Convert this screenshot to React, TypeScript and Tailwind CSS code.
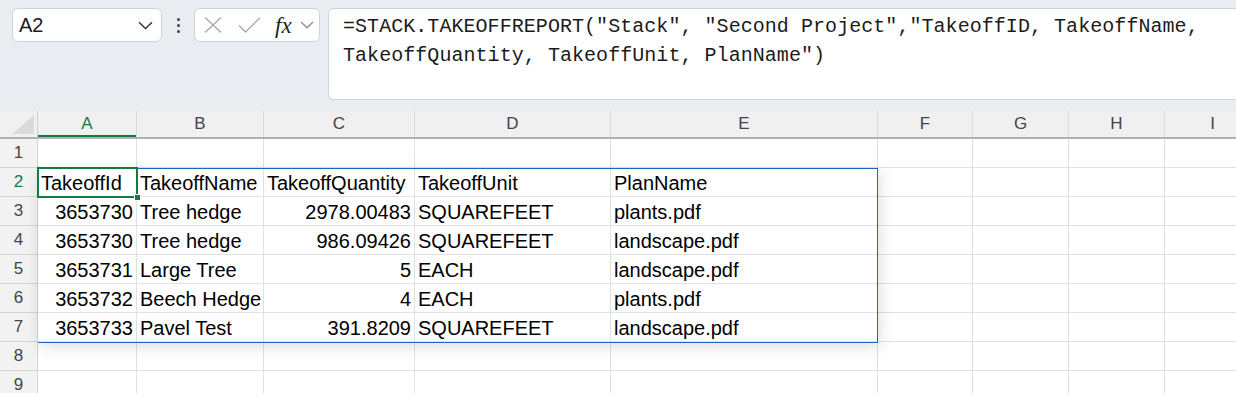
import React from 'react';

const cols = ['A', 'B', 'C', 'D', 'E', 'F', 'G', 'H', 'I'];

type Cell = { v: string; right?: boolean };

const rows: Cell[][] = [
  [],
  [{ v: 'TakeoffId' }, { v: 'TakeoffName' }, { v: 'TakeoffQuantity' }, { v: 'TakeoffUnit' }, { v: 'PlanName' }],
  [{ v: '3653730', right: true }, { v: 'Tree hedge' }, { v: '2978.00483', right: true }, { v: 'SQUAREFEET' }, { v: 'plants.pdf' }],
  [{ v: '3653730', right: true }, { v: 'Tree hedge' }, { v: '986.09426', right: true }, { v: 'SQUAREFEET' }, { v: 'landscape.pdf' }],
  [{ v: '3653731', right: true }, { v: 'Large Tree' }, { v: '5', right: true }, { v: 'EACH' }, { v: 'landscape.pdf' }],
  [{ v: '3653732', right: true }, { v: 'Beech Hedge' }, { v: '4', right: true }, { v: 'EACH' }, { v: 'plants.pdf' }],
  [{ v: '3653733', right: true }, { v: 'Pavel Test' }, { v: '391.8209', right: true }, { v: 'SQUAREFEET' }, { v: 'landscape.pdf' }],
  [],
  [],
];

const gridCols = 'grid grid-cols-[38px_99px_127px_151px_196px_267px_95px_96px_96px_96px]';

const FormulaBar: React.FC = () => (
  <div className="flex h-[111px] items-start bg-[#e9edf2] pl-3 pt-2 overflow-hidden">
    {/* Name box */}
    <div className="flex h-[34px] w-[150px] items-center justify-between rounded-md border border-[#cfd3d8] bg-white pl-[6px] pr-[8px]">
      <span className="text-[20px] text-[#1b1b1b]">A2</span>
      <svg width="15" height="9" viewBox="0 0 15 9" fill="none">
        <path d="M1 1.2 L7.5 7.5 L14 1.2" stroke="#333" strokeWidth="1.4" />
      </svg>
    </div>

    {/* more dots */}
    <div className="flex h-[34px] w-[32px] flex-col items-center justify-center gap-[3px]">
      <span className="h-[3px] w-[3px] rounded-full bg-[#444]" />
      <span className="h-[3px] w-[3px] rounded-full bg-[#444]" />
      <span className="h-[3px] w-[3px] rounded-full bg-[#444]" />
    </div>

    {/* cancel / enter / fx */}
    <div className="flex h-[34px] w-[126px] items-center rounded-md border border-[#cfd3d8] bg-white pl-[9px]">
      <svg width="18" height="16" viewBox="0 0 18 16" fill="none">
        <path d="M1 0.5 L17 15.5 M17 0.5 L1 15.5" stroke="#a8a8a8" strokeWidth="1.3" />
      </svg>
      <svg className="ml-[16px]" width="23" height="16" viewBox="0 0 23 16" fill="none">
        <path d="M1 8.5 L7.5 15 L22 0.7" stroke="#a8a8a8" strokeWidth="1.3" />
      </svg>
      <span
        className="ml-[14px] text-[23px] italic leading-none text-[#222]"
        style={{ fontFamily: '"Liberation Serif", serif' }}
      >
        fx
      </span>
      <svg className="ml-[8px]" width="14" height="8" viewBox="0 0 14 8" fill="none">
        <path d="M1 1 L7 6.8 L13 1" stroke="#8a8a8a" strokeWidth="1.2" />
      </svg>
    </div>

    {/* formula */}
    <div className="ml-2 -mr-3 h-[92px] flex-1 rounded-md border border-[#cfd3d8] bg-white pl-[14px] pt-[3px]">
      <p
        className="text-[20px] leading-[29px] tracking-[0.05px] text-[#1b1b1b] whitespace-pre"
        style={{ fontFamily: '"Liberation Mono", monospace' }}
      >
        {'=STACK.TAKEOFFREPORT("Stack", "Second Project","TakeoffID, TakeoffName,\nTakeoffQuantity, TakeoffUnit, PlanName")'}
      </p>
    </div>
  </div>
);

const Sheet: React.FC = () => (
  <div className="relative w-[1262px]">
    {/* column header */}
    <div className={`${gridCols} h-[28px] bg-[#f0f0f0] border-b-2 border-[#b1b1b1]`}>
      <div className="relative border-r border-[#d0d0d0]">
        <svg className="absolute right-[3px] bottom-[3px]" width="22" height="19" viewBox="0 0 22 19">
          <polygon points="22,0 22,19 0,19" fill="#dadada" />
        </svg>
      </div>
      {cols.map((c) => (
        <div
          key={c}
          className={`flex items-center justify-center border-r border-[#dadada] text-[17px] ${
            c === 'A' ? 'text-[#107c41] shadow-[inset_0_-2px_0_#107c41]' : 'text-[#444]'
          }`}
        >
          {c}
        </div>
      ))}
    </div>

    {rows.map((r, i) => (
      <div key={i} className={`${gridCols} h-[29px]`}>
        <div
          className={`flex items-center justify-center border-r border-b border-[#d4d4d4] bg-[#f2f2f2] text-[17px] ${
            i === 1 ? 'text-[#107c41]' : 'text-[#444]'
          }`}
        >
          {i + 1}
        </div>
        {cols.map((c, j) => {
          const cell = r[j];
          return (
            <div
              key={c}
              className={`flex items-center overflow-hidden whitespace-nowrap border-r border-b border-[#e1e1e1] bg-white px-[3px] pt-[2px] text-[20px] text-black ${
                cell?.right ? 'justify-end' : 'justify-start'
              }`}
            >
              {cell?.v}
            </div>
          );
        })}
      </div>
    ))}

    {/* spill range outline */}
    <div className="pointer-events-none absolute left-[38px] top-[57px] h-[175px] w-[840px] border-t border-r border-b border-[#1d64c4] shadow-[2px_4px_14px_rgba(0,0,0,0.13)]" />

    {/* active cell */}
    <div className="pointer-events-none absolute left-[37px] top-[56px] h-[31px] w-[101px] border-2 border-[#107c41]">
      <div className="absolute -right-[5px] -bottom-[5px] h-[7px] w-[7px] border border-white bg-[#107c41]" />
    </div>
  </div>
);

const App: React.FC = () => {
  return (
    <div className="h-[393px] w-[1236px] overflow-hidden bg-white" style={{ fontFamily: '"Liberation Sans", Arial, sans-serif' }}>
      <FormulaBar />
      <Sheet />
    </div>
  );
};

export default App;
